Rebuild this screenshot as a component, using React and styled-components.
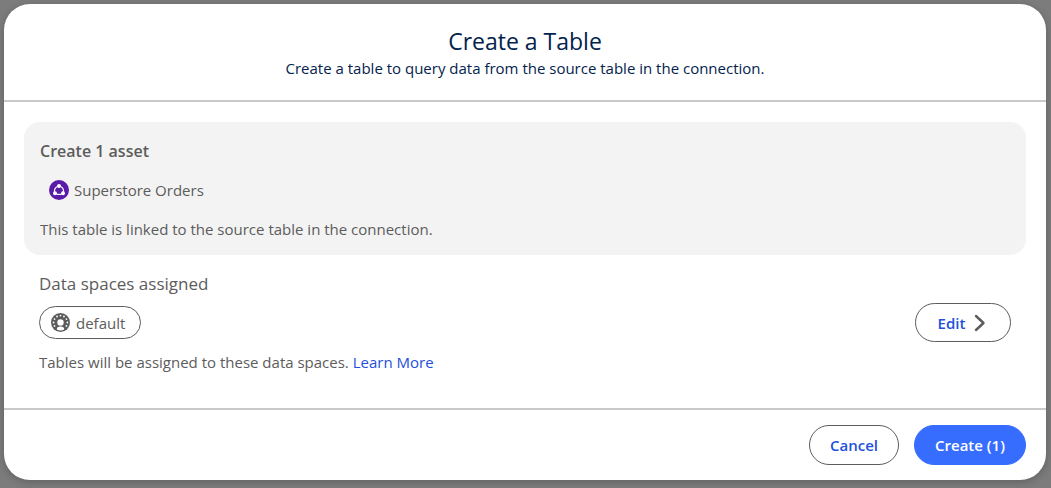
import React from "react";
import styled, { createGlobalStyle } from "styled-components";

const GlobalStyle = createGlobalStyle`
  *, *::before, *::after { box-sizing: border-box; }
  body {
    margin: 0;
    background: #7c7c7c;
    font-family: "Segoe UI", "Open Sans", "Noto Sans", sans-serif;
    font-size: 15px;
    line-height: 20px;
    color: #5c5c5c;
  }
  h2, h3, h4, p { margin: 0; }
`;

const Backdrop = styled.div`
  min-height: 100vh;
  padding: 4px 5px 8px 4px;
  display: flex;
`;

const Dialog = styled.section`
  flex: 1;
  display: flex;
  flex-direction: column;
  background: #fff;
  border-radius: 26px;
  box-shadow: 0 2px 8px rgba(0, 0, 0, 0.22);
`;

const Header = styled.header`
  padding: 21px 16px;
  text-align: center;
  color: #03234d;
  border-bottom: 2px solid #c9c9c9;
`;

const Title = styled.h2`
  font-size: 23px;
  line-height: 32px;
  font-weight: 400;
`;

const Subtitle = styled.p`
  line-height: 22px;
`;

const Body = styled.div`
  flex: 1;
  padding: 20px;
`;

const AssetCard = styled.section`
  display: flex;
  flex-direction: column;
  gap: 19px;
  padding: 19px 16px 16px;
  border-radius: 16px;
  background: #f3f3f3;
`;

const CardTitle = styled.h3`
  font-size: 16px;
  line-height: 20px;
  font-weight: 600;
`;

const AssetRow = styled.div`
  display: flex;
  align-items: center;
  gap: 5px;
  padding-left: 9px;
`;

const Spaces = styled.section`
  padding: 16px 15px 0;
`;

const SpacesTitle = styled.h3`
  font-size: 17px;
  line-height: 26px;
  font-weight: 400;
`;

const SpacesRow = styled.div`
  display: flex;
  align-items: center;
  justify-content: space-between;
  margin: 6px 0 10px;
`;

const Pill = styled.span`
  display: inline-flex;
  align-items: center;
  gap: 6px;
  height: 33px;
  padding: 0 15px 0 11px;
  border: 1px solid #5c5c5c;
  border-radius: 17px;
`;

const Button = styled.button`
  display: inline-flex;
  align-items: center;
  justify-content: center;
  gap: 9px;
  height: ${(p) => p.$height || "40px"};
  min-width: ${(p) => p.$width};
  padding: 0 16px;
  border: 1px solid ${(p) => (p.$primary ? "#366dff" : "#5c5c5c")};
  border-radius: 20px;
  background: ${(p) => (p.$primary ? "#366dff" : "#fff")};
  color: ${(p) => (p.$primary ? "#fff" : "#2250db")};
  font: inherit;
  font-weight: 600;
  cursor: pointer;
`;

const Link = styled.a`
  color: #2250db;
  text-decoration: none;
`;

const Footer = styled.footer`
  display: flex;
  justify-content: flex-end;
  gap: 15px;
  padding: 15px 20px;
  border-top: 2px solid #c9c9c9;
`;

const AssetIcon = () => (
  <svg width="20" height="20" viewBox="0 0 20 20" aria-hidden="true">
    <circle cx="10" cy="10" r="10" fill="#5a1ba9" />
    <path
      d="M8.500 6.500A5.400 5.400 0 0 0 5.500 12M11.500 6.500A5.400 5.400 0 0 1 14.500 12M7.500 14.300h5"
      fill="none"
      stroke="#fff"
      strokeWidth="1.200"
    />
    <g fill="#fff">
      <circle cx="10" cy="6" r="2" />
      <circle cx="6" cy="13.200" r="2" />
      <circle cx="14" cy="13.200" r="2" />
    </g>
  </svg>
);

const dots = [150, 180, 210, 240, 270, 300, 330, 0, 30].map((deg) => {
  const a = (deg * Math.PI) / 180;
  return [9.5 + 6.9 * Math.cos(a), 9.5 + 6.9 * Math.sin(a)];
});

const SpaceIcon = () => (
  <svg width="19" height="19" viewBox="0 0 19 19" aria-hidden="true">
    <circle cx="9.500" cy="9.500" r="9.500" fill="#5c5c5c" />
    <g fill="#fff">
      {dots.map(([x, y]) => (
        <circle key={`${x},${y}`} cx={x} cy={y} r="0.900" />
      ))}
      <circle cx="9.500" cy="9.500" r="3.200" />
      <path d="M5.800 16.400c0-2 1.300-2.800 3.700-2.800s3.700.8 3.700 2.800a7.600 7.600 0 0 1-7.400 0Z" />
    </g>
  </svg>
);

const Chevron = () => (
  <svg width="14" height="18" viewBox="0 0 14 18" aria-hidden="true">
    <path d="M2 2l7.500 7L2 16" fill="none" stroke="#5c5c5c" strokeWidth="2.400" strokeLinecap="round" strokeLinejoin="round" />
  </svg>
);

export default function App() {
  return (
    <>
      <GlobalStyle />
      <Backdrop>
        <Dialog role="dialog" aria-modal="true" aria-labelledby="dialog-title">
          <Header>
            <Title id="dialog-title">Create a Table</Title>
            <Subtitle>Create a table to query data from the source table in the connection.</Subtitle>
          </Header>
          <Body>
            <AssetCard>
              <CardTitle>Create 1 asset</CardTitle>
              <AssetRow>
                <AssetIcon />
                <span>Superstore Orders</span>
              </AssetRow>
              <p>This table is linked to the source table in the connection.</p>
            </AssetCard>
            <Spaces>
              <SpacesTitle>Data spaces assigned</SpacesTitle>
              <SpacesRow>
                <Pill>
                  <SpaceIcon />
                  default
                </Pill>
                <Button type="button" $width="96px" $height="39px">
                  Edit
                  <Chevron />
                </Button>
              </SpacesRow>
              <p>
                Tables will be assigned to these data spaces. <Link href="#learn-more">Learn More</Link>
              </p>
            </Spaces>
          </Body>
          <Footer>
            <Button type="button" $width="90px">Cancel</Button>
            <Button type="button" $primary $width="112px">Create (1)</Button>
          </Footer>
        </Dialog>
      </Backdrop>
    </>
  );
}
